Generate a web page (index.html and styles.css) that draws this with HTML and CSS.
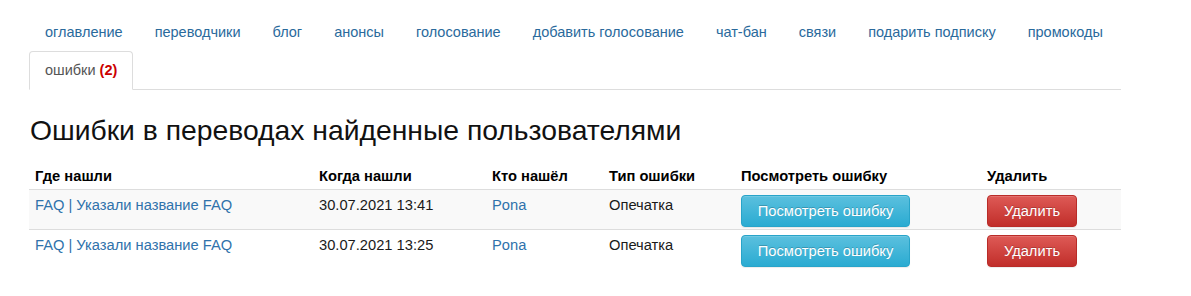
FILE: index.html
```html
<!DOCTYPE html>
<html lang="ru">
<head>
    <meta charset="UTF-8">
    <title>Ошибки в переводах</title>
    <link rel="stylesheet" href="styles.css">
</head>
<body>
    <div class="container">
        <ul class="nav-tabs">
            <li><a href="#">оглавление</a></li>
            <li><a href="#">переводчики</a></li>
            <li><a href="#">блог</a></li>
            <li><a href="#">анонсы</a></li>
            <li><a href="#">голосование</a></li>
            <li><a href="#">добавить голосование</a></li>
            <li><a href="#">чат-бан</a></li>
            <li><a href="#">связи</a></li>
            <li><a href="#">подарить подписку</a></li>
            <li><a href="#">промокоды</a></li>
            <li class="active"><a href="#">ошибки <b class="count">(2)</b></a></li>
        </ul>

        <h3 class="title">Ошибки в переводах найденные пользователями</h3>

        <table class="table">
            <thead>
                <tr>
                    <th class="col-where">Где нашли</th>
                    <th class="col-when">Когда нашли</th>
                    <th class="col-who">Кто нашёл</th>
                    <th class="col-type">Тип ошибки</th>
                    <th class="col-view">Посмотреть ошибку</th>
                    <th class="col-del">Удалить</th>
                </tr>
            </thead>
            <tbody>
                <tr class="odd">
                    <td><a href="#">FAQ | Указали название FAQ</a></td>
                    <td>30.07.2021 13:41</td>
                    <td><a href="#">Pona</a></td>
                    <td>Опечатка</td>
                    <td><a href="#" class="btn btn-info">Посмотреть ошибку</a></td>
                    <td><a href="#" class="btn btn-danger">Удалить</a></td>
                </tr>
                <tr>
                    <td><a href="#">FAQ | Указали название FAQ</a></td>
                    <td>30.07.2021 13:25</td>
                    <td><a href="#">Pona</a></td>
                    <td>Опечатка</td>
                    <td><a href="#" class="btn btn-info">Посмотреть ошибку</a></td>
                    <td><a href="#" class="btn btn-danger">Удалить</a></td>
                </tr>
            </tbody>
        </table>
    </div>
</body>
</html>
```

FILE: styles.css
```css
body {
    font-family: 'Liberation Sans', Arial, sans-serif;
    font-size: 14.7px;
    line-height: 20px;
    color: #1a1a1a;
    background: #fff;
    margin: 0;
    padding: 0;
}

a {
    color: #2f72ab;
    text-decoration: none;
}

.container {
    width: 1092px;
    padding-left: 29px;
}

/* вкладки */
.nav-tabs {
    list-style: none;
    margin: 13px 0 0;
    padding: 0;
    display: flex;
    flex-wrap: wrap;
    border-bottom: 1px solid #ddd;
    font-size: 14.5px;
}

.nav-tabs li {
    margin-bottom: -1px;
}

.nav-tabs a {
    display: block;
    padding: 9px 15px;
    line-height: 19px;
    border: 1px solid transparent;
    border-radius: 4px 4px 0 0;
    color: #2a6a9c;
}

.nav-tabs .active a {
    color: #555;
    background: #fff;
    border-color: #ddd #ddd transparent;
}

.count {
    color: #c00;
}

.title {
    font-family: 'Liberation Sans Narrow', 'Liberation Sans', Arial, sans-serif;
    font-size: 28.3px;
    font-weight: normal;
    line-height: 31px;
    color: #111;
    margin: 25px 0 16px 1px;
}

/* таблица */
.table {
    width: 1092px;
    border-collapse: collapse;
    table-layout: fixed;
}

.table th,
.table td {
    box-sizing: border-box;
}

.table th {
    text-align: left;
    font-weight: bold;
    color: #000;
    padding: 4px 6px 3px;
    border-bottom: 1px solid #ddd;
}

.table td {
    vertical-align: top;
    padding: 5px 6px 2px;
}

.table tr + tr td {
    border-top: 1px solid #ddd;
}

.table .odd td {
    background: #f9f9f9;
}

.col-where { width: 284px; }
.col-when { width: 173px; }
.col-who { width: 117px; }
.col-type { width: 132px; }
.col-view { width: 246px; }
.col-del { width: 140px; }

.btn {
    display: inline-block;
    box-sizing: border-box;
    height: 32px;
    line-height: 30px;
    text-align: center;
    color: #fff;
    border: 1px solid transparent;
    border-radius: 4px;
    text-shadow: 0 -1px 0 rgba(0, 0, 0, 0.2);
    box-shadow: inset 0 1px 0 rgba(255, 255, 255, 0.15), 0 1px 1px rgba(0, 0, 0, 0.075);
}

.btn-info {
    width: 169px;
    background: linear-gradient(#5bc0de, #2aabd2);
    border-color: #28a4c9;
}

.btn-danger {
    width: 90px;
    background: linear-gradient(#de5a56, #c12e2a);
    border-color: #b92c28;
}
```
